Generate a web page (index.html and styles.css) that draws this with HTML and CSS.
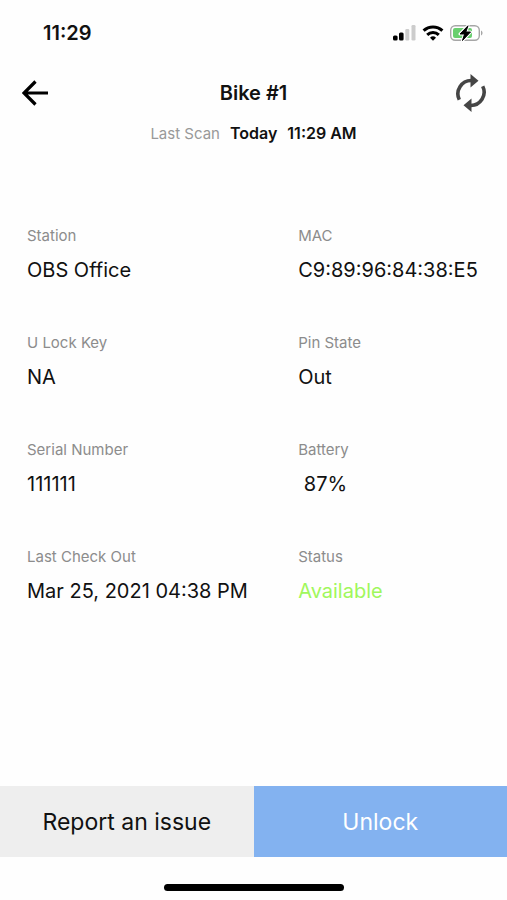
FILE: index.html
```html
<!DOCTYPE html>
<html lang="en">
<head>
<meta charset="utf-8">
<meta name="viewport" content="width=device-width, initial-scale=1">
<title>Bike #1</title>
<link rel="stylesheet" href="styles.css">
</head>
<body>
<div class="status-bar">
  <time class="clock">11:29</time>
  <div class="indicators">
    <svg width="23" height="16" viewBox="0 0 23 16" aria-hidden="true">
      <rect x="0" y="10.500" width="4.600" height="5" rx="1.500"/>
      <rect x="6" y="7.500" width="4.600" height="8" rx="1.500"/>
      <rect x="12.300" y="4" width="4" height="11.500" rx="1.300" fill="#ccc"/>
      <rect x="18.500" y="0" width="4" height="15.500" rx="1.300" fill="#ccc"/>
    </svg>
    <svg width="22" height="16" viewBox="0 0 22 16" fill="none" stroke="#000" stroke-width="3" aria-hidden="true">
      <path d="M1.600 5.700a13.600 13.600 0 0 1 18.800 0"/>
      <path d="M5.200 9.900a8.400 8.400 0 0 1 11.600 0"/>
      <path d="M11 15.800l-3-3.100a4.400 4.400 0 0 1 6 0z" fill="#000" stroke="none"/>
    </svg>
    <svg width="33" height="18" viewBox="0 0 33 18" aria-hidden="true">
      <rect x="0.700" y="1.700" width="28.600" height="14.600" rx="4.500" fill="#fff" stroke="#a6a6a6" stroke-width="1.400"/>
      <rect x="3" y="4" width="19" height="10" rx="2" fill="#69cf6f"/>
      <path d="M31 6.500c2 .7 2 4.300 0 5z" fill="#a6a6a6"/>
      <path d="M18 1.800L10 10h4.600L12.500 16.500L20.500 8h-4.700z" stroke="#fff" stroke-width="3" stroke-linejoin="round"/>
      <path d="M18 1.800L10 10h4.600L12.500 16.500L20.500 8h-4.700z" stroke="#000" stroke-width="1" stroke-linejoin="round"/>
    </svg>
  </div>
</div>

<header class="top-bar">
  <button class="icon-button" type="button" aria-label="Back">
    <svg width="28" height="28" viewBox="0 0 28 28" fill="none" stroke="#000" stroke-width="3.200" aria-hidden="true">
      <path d="M26 14H2.500M13.500 2.500L2 14l11.500 11.500"/>
    </svg>
  </button>
  <h1 class="title">Bike #1</h1>
  <button class="icon-button" type="button" aria-label="Refresh">
    <svg width="32" height="38" viewBox="0 0 32 38" aria-hidden="true">
      <g fill="none" stroke="#454545" stroke-width="3.600">
        <path d="M4.300 25.700A13.300 13.300 0 0 1 16.500 6.500"/>
        <path d="M27.700 12.300A13.300 13.300 0 0 1 15.500 31.500"/>
      </g>
      <path d="M15.500 0L23.500 6.800L15.500 13.500zM16.500 24.500L8.500 31.200L16.500 38z" fill="#454545"/>
    </svg>
  </button>
</header>

<p class="scan"><span class="scan-label">Last Scan</span><span>Today</span><span>11:29 AM</span></p>

<main>
  <dl class="details">
    <div class="item"><dt>Station</dt><dd>OBS Office</dd></div>
    <div class="item"><dt>MAC</dt><dd>C9:89:96:84:38:E5</dd></div>
    <div class="item"><dt>U Lock Key</dt><dd>NA</dd></div>
    <div class="item"><dt>Pin State</dt><dd>Out</dd></div>
    <div class="item"><dt>Serial Number</dt><dd>111111</dd></div>
    <div class="item"><dt>Battery</dt><dd>&nbsp;87%</dd></div>
    <div class="item"><dt>Last Check Out</dt><dd>Mar 25, 2021 04:38 PM</dd></div>
    <div class="item"><dt>Status</dt><dd class="available">Available</dd></div>
  </dl>
</main>

<footer>
  <div class="actions">
    <button class="action" type="button">Report an issue</button>
    <button class="action action-primary" type="button">Unlock</button>
  </div>
  <div class="home-area"><div class="home-indicator"></div></div>
</footer>
</body>
</html>
```
FILE: styles.css
```css
* {
  box-sizing: border-box;
}

body {
  margin: 0;
  min-height: 100vh;
  display: flex;
  flex-direction: column;
  background: #fefefe;
  color: #111;
  font-family: Inter, "Liberation Sans", sans-serif;
}

.status-bar {
  display: flex;
  align-items: center;
  justify-content: space-between;
  height: 66px;
  padding: 0 24px 0 43px;
}

.clock {
  font-size: 20px;
  font-weight: 600;
}

.indicators {
  display: flex;
  align-items: center;
  gap: 6px;
}

.top-bar {
  display: flex;
  align-items: center;
  justify-content: space-between;
  height: 54px;
  padding: 0 20px;
}

.icon-button {
  display: flex;
  align-items: center;
  justify-content: center;
  width: 32px;
  height: 40px;
  padding: 0;
  border: 0;
  background: none;
}

.title {
  margin: 0;
  font-size: 20px;
  font-weight: 600;
}

.scan {
  display: flex;
  justify-content: center;
  align-items: baseline;
  gap: 10px;
  margin: 3px 0 0;
  font-size: 16px;
  line-height: 20px;
  font-weight: 600;
}

.scan-label {
  color: #999;
  font-size: 15px;
  font-weight: 400;
}

main {
  flex: 1;
}

.details {
  display: grid;
  grid-template-columns: 3fr 2fr;
  row-gap: 49px;
  margin: 0;
  padding: 82px 28px 49px 27px;
}

.item {
  min-width: 0;
}

dt {
  color: #8c8c8c;
  font-size: 15px;
  line-height: 20px;
}

dd {
  margin: 10px 0 0;
  font-size: 20px;
  line-height: 28px;
  white-space: nowrap;
}

.available {
  color: #a0f75c;
}

.actions {
  display: grid;
  grid-template-columns: 1fr 1fr;
}

.action {
  height: 71px;
  padding: 0;
  border: 0;
  background: #eee;
  color: #111;
  font-family: inherit;
  font-size: 23px;
}

.action-primary {
  background: #83b2f0;
  color: #fff;
}

.home-area {
  display: flex;
  justify-content: center;
  padding: 27px 0 9px;
}

.home-indicator {
  width: 180px;
  height: 7px;
  border-radius: 4px;
  background: #000;
}
```
